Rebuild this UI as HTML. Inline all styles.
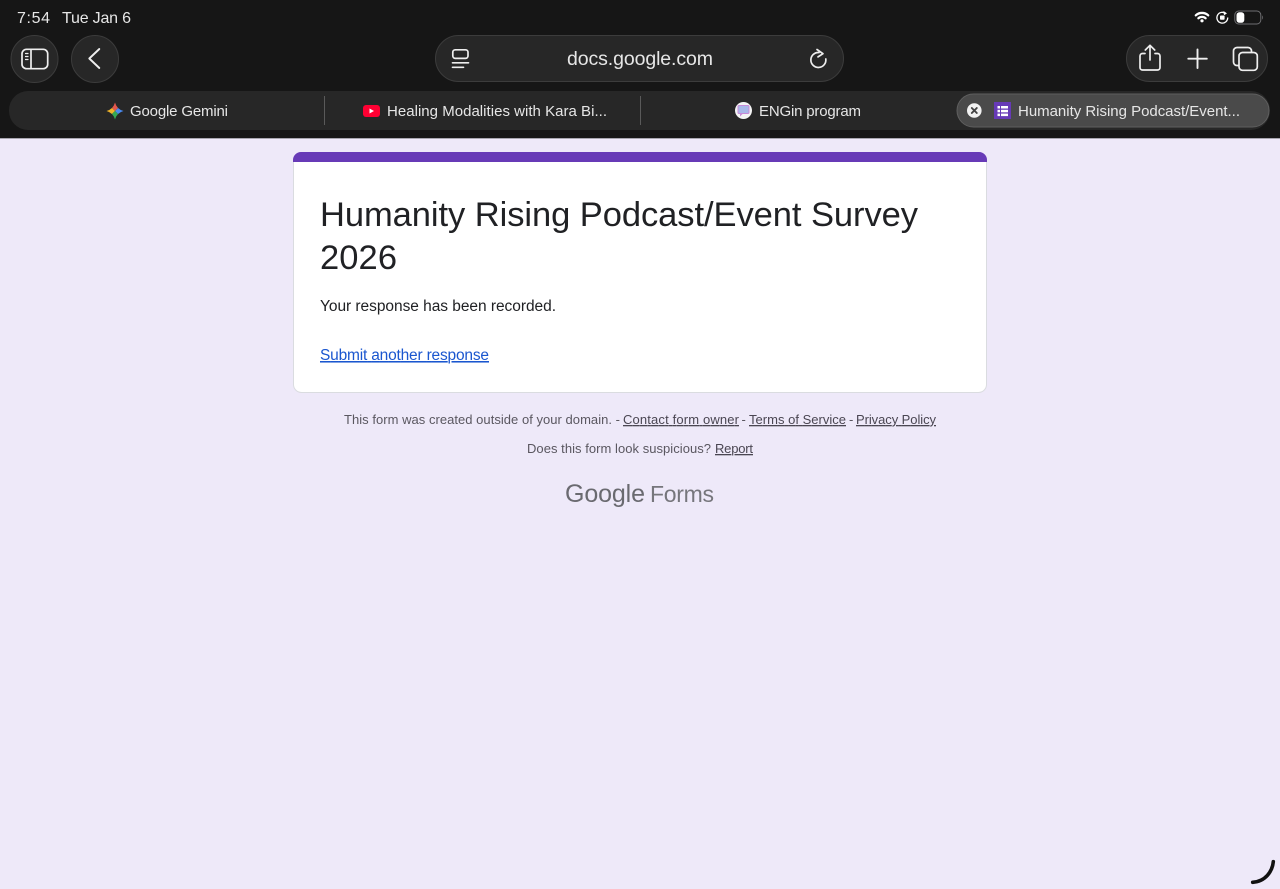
<!DOCTYPE html>
<html lang="en">
<head>
<meta charset="utf-8">
<title>Humanity Rising Podcast/Event Survey 2026</title>
<style>
html,body{margin:0;padding:0;width:1280px;height:889px;overflow:hidden;background:#eee9f9}
svg{display:block;filter:blur(.3px)}
text{font-family:"Liberation Sans",Arial,sans-serif}
.ui{fill:#e6e6e6;font-size:15px}
.ft{fill:#5a5760;font-size:13px}
.ftl{fill:#4a4652;font-size:13px;text-decoration:underline}
.ic{fill:none;stroke:#eeeeee;stroke-width:1.7;stroke-linecap:round;stroke-linejoin:round}
</style>
</head>
<body>
<svg width="1280" height="889" viewBox="0 0 1280 889" xmlns="http://www.w3.org/2000/svg">
  <defs>
    <clipPath id="gem"><path d="M115 102.500Q116.800 109.200 123.500 111Q116.800 112.800 115 119.500Q113.200 112.800 106.500 111Q113.200 109.200 115 102.500z"/></clipPath>
  </defs>
  <rect width="1280" height="889" fill="#eee9f9"/>
  <rect width="1280" height="138" fill="#161616"/>
  <rect y="138" width="1280" height="1" fill="#a8a6b0"/>

  <!-- status bar -->
  <text x="17" y="23" class="ui" textLength="33" style="font-size:16px">7:54</text>
  <text x="62" y="23" class="ui" textLength="69" style="font-size:16px">Tue Jan 6</text>
  <path d="M1195.800 15.300a9.300 9.300 0 0 1 12.400 0M1198.400 18.200a5.500 5.500 0 0 1 7.200 0" fill="none" stroke="#fff" stroke-width="2.300" stroke-linecap="round"/>
  <circle cx="1202" cy="20.800" r="1.600" fill="#fff"/>
  <path d="M1226 13.800a5.400 5.400 0 1 0 1.700 3.700" fill="none" stroke="#fff" stroke-width="1.300"/>
  <path d="M1223.500 11l3.500 2.400-3 1.800z" fill="#fff"/>
  <rect x="1220" y="15.500" width="4.600" height="4.200" rx=".8" fill="#fff"/>
  <rect x="1234.800" y="11" width="26" height="13" rx="4" fill="none" stroke="#6f6f72" stroke-width="1"/>
  <rect x="1236.500" y="12.300" width="7.800" height="10.500" rx="2.800" fill="#fff"/>
  <path d="M1262.300 15.500c1 .5 1 3.500 0 4z" fill="#77777a"/>

  <!-- toolbar buttons -->
  <g fill="#272727" stroke="#3c3c3c" stroke-width="1">
    <circle cx="34.500" cy="59" r="23.500"/>
    <circle cx="95" cy="59" r="23.500"/>
    <rect x="435.500" y="35.500" width="408" height="46" rx="23"/>
    <rect x="1126.500" y="35.500" width="141" height="46" rx="23"/>
  </g>
  <g class="ic">
    <rect x="22" y="49.300" width="25.700" height="19.400" rx="4.500"/>
    <path d="M31 49.300v19.400"/>
    <path d="M25.500 53.500h2.500M25.500 56.500h2.500M25.500 59.500h2.500" stroke-width="1.200"/>
    <path d="M99.300 49l-10 9.500 10 9.500" stroke-width="1.900"/>
    <rect x="452.800" y="49.800" width="15.200" height="8.600" rx="2.500"/>
    <path d="M452.500 62.800h16M452.500 67.300h11"/>
    <path d="M819 52.500A7.500 7.500 0 1 0 825.800 59"/>
    <path d="M817 49.500l6 4.200-5 3.200"/>
    <path d="M1145 53.500h-2.500a2.500 2.500 0 0 0-2.500 2.500V67.500a2.500 2.500 0 0 0 2.500 2.500h15a2.500 2.500 0 0 0 2.500-2.500V56a2.500 2.500 0 0 0-2.500-2.500h-2.500"/>
    <path d="M1150 60V45.500M1145.300 50l4.700-4.700 4.700 4.700"/>
    <path d="M1197.500 49.500v18.500M1188.300 58.700h18.500" stroke-width="1.900"/>
    <path d="M1238.500 65.500h-1.500a3.500 3.500 0 0 1-3.500-3.500v-11a3.500 3.500 0 0 1 3.500-3.500h11a3.500 3.500 0 0 1 3.500 3.500v1"/>
    <rect x="1239" y="52.500" width="18.300" height="17.800" rx="3.500"/>
  </g>
  <text x="567" y="65" style="font-size:19.500px;fill:#e6e6e6" textLength="146">docs.google.com</text>

  <!-- tab strip -->
  <rect x="9" y="91" width="1261" height="39" rx="19" fill="#272727"/>
  <rect x="324" y="96" width="1" height="29" fill="#5a5a5a"/>
  <rect x="640" y="96" width="1" height="29" fill="#5a5a5a"/>
  <rect x="957" y="94" width="312" height="33" rx="16.500" fill="#4a4a4a" stroke="#5f5f5f" stroke-width="1"/>

  <!-- Gemini -->
  <g clip-path="url(#gem)">
    <polygon points="115,111 125,101 125,121" fill="#4a8af0"/>
    <polygon points="115,111 105,101 125,101" fill="#e2574c"/>
    <polygon points="115,111 105,101 105,121" fill="#f0b429"/>
    <polygon points="115,111 105,121 125,121" fill="#34a853"/>
  </g>
  <text x="130" y="116" class="ui" textLength="98">Google Gemini</text>

  <!-- YouTube -->
  <rect x="363" y="105" width="17" height="12" rx="3" fill="#ff0033"/>
  <path d="M369.500 108.500l4.500 2.500-4.500 2.500z" fill="#fff"/>
  <text x="387" y="116" class="ui" textLength="220">Healing Modalities with Kara Bi...</text>

  <!-- ENGin -->
  <circle cx="743.500" cy="110.500" r="8.500" fill="#f4f4f4"/>
  <rect x="738" y="105.500" width="11" height="8" rx="1" fill="#a9b8ea" stroke="#c78bd8" stroke-width="1"/>
  <path d="M740 113.500v3l3-3z" fill="#c78bd8"/>
  <text x="759" y="116" class="ui" textLength="102">ENGin program</text>

  <!-- Active tab -->
  <circle cx="974.300" cy="110.500" r="7.300" fill="#f2f2f2"/>
  <path d="M971.800 108l5 5M976.800 108l-5 5" stroke="#444" stroke-width="1.900" stroke-linecap="round"/>
  <rect x="994" y="102" width="17" height="17" fill="#673ab7"/>
  <g fill="#fff">
    <rect x="997.500" y="106" width="2.500" height="2.500"/><rect x="1001" y="106" width="7" height="2.500"/>
    <rect x="997.500" y="109.800" width="2.500" height="2.500"/><rect x="1001" y="109.800" width="7" height="2.500"/>
    <rect x="997.500" y="113.600" width="2.500" height="2.500"/><rect x="1001" y="113.600" width="7" height="2.500"/>
  </g>
  <text x="1018" y="116" class="ui" textLength="222">Humanity Rising Podcast/Event...</text>

  <!-- card -->
  <rect x="293.500" y="152.500" width="693" height="240" rx="8" fill="#fff" stroke="#dadce0" stroke-width="1"/>
  <path d="M293 162v-2a8 8 0 0 1 8-8h678a8 8 0 0 1 8 8v2z" fill="#673ab7"/>
  <text x="320" y="226" style="font-size:34.500px;fill:#202124" textLength="598">Humanity Rising Podcast/Event Survey</text>
  <text x="320" y="269" style="font-size:34.500px;fill:#202124" textLength="77">2026</text>
  <text x="320" y="311" style="font-size:15.500px;fill:#202124" textLength="236">Your response has been recorded.</text>
  <text x="320" y="360" style="font-size:15.500px;fill:#1a56cf;text-decoration:underline" textLength="169">Submit another response</text>

  <!-- footer -->
  <text x="344" y="424" class="ft" textLength="276">This form was created outside of your domain. -</text>
  <text x="623" y="424" class="ftl" textLength="116">Contact form owner</text>
  <text x="741.500" y="424" class="ft">-</text>
  <text x="749" y="424" class="ftl" textLength="97">Terms of Service</text>
  <text x="849" y="424" class="ft">-</text>
  <text x="856" y="424" class="ftl" textLength="80">Privacy Policy</text>
  <text x="527" y="453" class="ft" textLength="184">Does this form look suspicious?</text>
  <text x="715" y="453" class="ftl" textLength="38">Report</text>

  <!-- logo -->
  <text x="565" y="502" style="font-size:25px;fill:#6a6a70" textLength="80">Google</text>
  <text x="650" y="502" style="font-size:23px;fill:#76767c" textLength="64">Forms</text>

  <!-- corner spinner -->
  <path d="M1273.300 861.700c-1 10-8 19.800-20.600 20.600" fill="none" stroke="#111" stroke-width="3.600" stroke-linecap="round"/>
</svg>
</body>
</html>
